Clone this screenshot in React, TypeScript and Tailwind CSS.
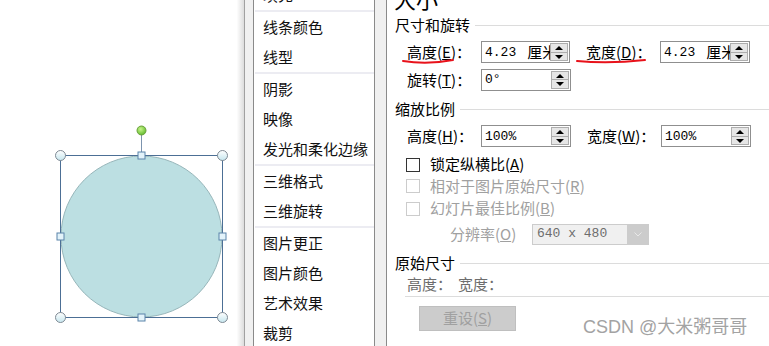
import React from "react";

const CJK = '"Noto Sans CJK SC", "Noto Sans", sans-serif';
const MONO = '"Liberation Mono", "Noto Sans CJK SC", monospace';

function Spin() {
  return (
    <div className="flex flex-col w-[19px] h-full py-[1px] pr-[1px] gap-0">
      <div className="flex-1 bg-[#e6e6e6] border border-[#adadad] flex items-center justify-center">
        <svg width="8" height="4" viewBox="0 0 8 4"><path d="M0 4 L4 0 L8 4Z" fill="#000" /></svg>
      </div>
      <div className="flex-1 bg-[#e6e6e6] border border-t-0 border-[#adadad] flex items-center justify-center">
        <svg width="8" height="4" viewBox="0 0 8 4"><path d="M0 0 L4 4 L8 0Z" fill="#000" /></svg>
      </div>
    </div>
  );
}

function Field({ value, unit, w }: { value: string; unit?: boolean; w: number }) {
  return (
    <div
      className="h-[22px] border border-[#8f8f8f] bg-white flex items-stretch overflow-hidden"
      style={{ width: w }}
    >
      <div className="flex-1 overflow-hidden whitespace-nowrap pl-[3px] flex items-center text-[13px] text-black" style={{ fontFamily: MONO }}>
        {value}
        {unit && (
          <span className="ml-[11px] text-[15px]" style={{ fontFamily: CJK }}>
            厘米
          </span>
        )}
      </div>
      <Spin />
    </div>
  );
}

function Label({ text, k, w = 74 }: { text: string; k: string; w?: number }) {
  return (
    <div className="text-[15px] text-black whitespace-nowrap" style={{ width: w, fontFamily: CJK }}>
      {text}(<span className="underline">{k}</span>)：
    </div>
  );
}

function Header({ text }: { text: string }) {
  return (
    <div className="h-[24px] flex items-center gap-[5px] pl-[8px] text-[15px] text-black" style={{ fontFamily: CJK }}>
      <span className="whitespace-nowrap">{text}</span>
      <div className="flex-1 h-px bg-[#dcdcdc]" />
    </div>
  );
}

function Check({ text, k, disabled }: { text: string; k: string; disabled?: boolean }) {
  return (
    <div className="flex items-center pl-[19px] gap-[10px] text-[15px]" style={{ fontFamily: CJK }}>
      <div className={"w-[14px] h-[14px] bg-white border " + (disabled ? "border-[#cccccc]" : "border-[#333333]")} />
      <span className={disabled ? "text-[#a0a0a0]" : "text-black"}>
        {text}(<span className="underline">{k}</span>)
      </span>
    </div>
  );
}

function Canvas() {
  const corners = [
    [60.5, 155.5],
    [222.5, 155.5],
    [60.5, 317.5],
    [222.5, 317.5],
  ];
  const sides = [
    [141.5, 155.5],
    [60.5, 236.5],
    [222.5, 236.5],
    [141.5, 317.5],
  ];
  return (
    <div className="relative w-[244px] h-full bg-gradient-to-r from-white from-[97%] to-[#dcdcdc]">
      <svg className="absolute left-0 top-0" width="244" height="346" viewBox="0 0 244 346">
        <defs>
          <linearGradient id="hc" x1="0" y1="0" x2="0" y2="1">
            <stop offset="0" stopColor="#ffffff" />
            <stop offset="1" stopColor="#c6e6ee" />
          </linearGradient>
          <radialGradient id="gr" cx="0.4" cy="0.35" r="0.7">
            <stop offset="0" stopColor="#c8f58a" />
            <stop offset="1" stopColor="#5cb82a" />
          </radialGradient>
        </defs>
        <line x1="141.5" y1="134" x2="141.5" y2="152" stroke="#7c94ae" strokeWidth="1" />
        <circle cx="141.5" cy="236.5" r="80.5" fill="#bcdfe2" stroke="#97b6ba" strokeWidth="1" />
        <rect x="60.5" y="155.5" width="162" height="162" fill="none" stroke="#4c6f95" strokeWidth="1" />
        {corners.map(([x, y], i) => (
          <circle key={i} cx={x} cy={y} r="5" fill="url(#hc)" stroke="#7f8a94" strokeWidth="1" />
        ))}
        {sides.map(([x, y], i) => (
          <rect key={i} x={x - 3.5} y={y - 3.5} width="7" height="7" fill="#e3f3fa" stroke="#5b84aa" strokeWidth="1" />
        ))}
        <circle cx="141.5" cy="130.5" r="4.5" fill="url(#gr)" stroke="#6a9f3c" strokeWidth="1" />
      </svg>
    </div>
  );
}

const groups = [
  ["填充"],
  ["线条颜色", "线型"],
  ["阴影", "映像", "发光和柔化边缘"],
  ["三维格式", "三维旋转"],
  ["图片更正", "图片颜色", "艺术效果", "裁剪", "大小"],
];

function List() {
  return (
    <div className="w-[120px] h-full bg-white overflow-hidden">
      <div className="-mt-[20px] flex flex-col">
        {groups.map((g, gi) => (
          <React.Fragment key={gi}>
            {gi > 0 && <div className="h-[2px] ml-[1px] bg-[#ececf2]" />}
            {g.map((t) => (
              <div
                key={t}
                className="h-[30px] flex items-center pl-[9px] text-[15px] text-[#111] whitespace-nowrap"
                style={{ fontFamily: CJK }}
              >
                {t}
              </div>
            ))}
          </React.Fragment>
        ))}
      </div>
    </div>
  );
}

function Right() {
  return (
    <div className="relative flex-1 h-full bg-white overflow-hidden">
      <div className="-mt-[17px] h-[30px] leading-[30px] pl-[7px] text-[22px] text-black" style={{ fontFamily: CJK }}>
        大小
      </div>
      <Header text="尺寸和旋转" />
      <div className="mt-[4px] flex items-center pl-[20px]">
        <Label text="高度" k="E" />
        <Field value="4.23" unit w={89} />
        <div className="w-[16px]" />
        <Label text="宽度" k="D" />
        <Field value="4.23" unit w={90} />
      </div>
      <div className="mt-[5px] flex items-center pl-[20px]">
        <Label text="旋转" k="T" />
        <Field value="0°" w={90} />
      </div>
      <div className="mt-[6px]">
        <Header text="缩放比例" />
      </div>
      <div className="mt-[4px] flex items-center pl-[20px]">
        <Label text="高度" k="H" />
        <Field value="100%" w={90} />
        <div className="w-[16px]" />
        <Label text="宽度" k="W" />
        <Field value="100%" w={90} />
      </div>
      <div className="mt-[6px] h-[22px] flex items-center">
        <Check text="锁定纵横比" k="A" />
      </div>
      <div className="h-[21px] flex items-center">
        <Check text="相对于图片原始尺寸" k="R" disabled />
      </div>
      <div className="mt-[1px] h-[22px] flex items-center">
        <Check text="幻灯片最佳比例" k="B" disabled />
      </div>
      <div className="mt-[4px] h-[21px] flex items-center pl-[63px]">
        <div className="w-[82px] text-[15px] text-[#a0a0a0] whitespace-nowrap" style={{ fontFamily: CJK }}>
          分辨率(<span className="underline">O</span>)
        </div>
        <div className="w-[117px] h-[21px] border border-[#cccccc] bg-[#f0f0f0] flex items-stretch">
          <div className="flex-1 pl-[4px] flex items-center text-[13px] text-[#6d6d6d]" style={{ fontFamily: MONO }}>
            640 x 480
          </div>
          <div className="w-[21px] bg-[#cccccc] flex items-center justify-center">
            <svg width="8" height="5" viewBox="0 0 8 5">
              <path d="M0.5 0.5 L4 4 L7.5 0.5" fill="none" stroke="#e8e8e8" strokeWidth="1" />
            </svg>
          </div>
        </div>
      </div>
      <div className="mt-[7px]">
        <Header text="原始尺寸" />
      </div>
      <div className="h-[18px] flex items-center pl-[20px] text-[15px] text-[#6d6d6d]" style={{ fontFamily: CJK }}>
        <span className="w-[51px]">高度：</span>
        <span>宽度：</span>
      </div>
      <div className="mt-[2px] ml-[18px] h-px bg-[#dcdcdc]" />
      <div className="mt-[9px] ml-[32px] w-[97px] h-[25px] bg-[#cccccc] border border-[#bfbfbf] flex items-center justify-center text-[15px] text-[#a0a0a0]" style={{ fontFamily: CJK }}>
        重设(<span className="underline">S</span>)
      </div>

      <svg className="absolute left-0 top-0 pointer-events-none" width="382" height="80" viewBox="0 0 382 80">
        <path d="M16 61 Q40 65 66 60" fill="none" stroke="#e8121b" strokeWidth="2" strokeLinecap="round" />
        <path d="M190 61 Q222 64 258 60" fill="none" stroke="#e8121b" strokeWidth="2" strokeLinecap="round" />
      </svg>

      <div
        className="absolute left-[196px] top-[316px] leading-[22px] text-[18px] text-[#a3a3a3] whitespace-nowrap"
        style={{ fontFamily: '"Liberation Sans", "Noto Sans CJK SC", sans-serif' }}
      >
        CSDN @大米粥哥哥
      </div>
    </div>
  );
}

export default function App() {
  return (
    <div className="w-[769px] h-[346px] overflow-hidden flex bg-white">
      <Canvas />
      <div className="w-px h-full bg-[#a0a0a0]" />
      <div className="w-[8px] h-full bg-[#f0f0f0]" />
      <div className="w-px h-full bg-[#8a8a8a]" />
      <List />
      <div className="w-px h-full bg-[#8a8a8a]" />
      <div className="w-[11px] h-full bg-[#f0f0f0]" />
      <div className="w-px h-full bg-[#8a8a8a]" />
      <Right />
    </div>
  );
}
